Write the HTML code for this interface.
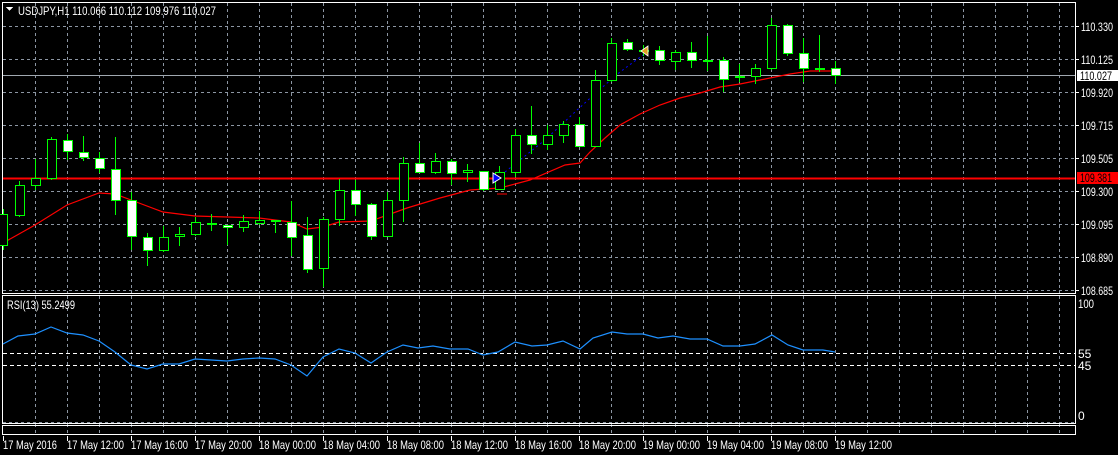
<!DOCTYPE html>
<html><head><meta charset="utf-8"><style>
html,body{margin:0;padding:0;background:#000;width:1118px;height:455px;overflow:hidden}
svg{display:block}
text{font-family:"Liberation Sans",sans-serif;font-size:12px;fill:#fff}
</style></head><body>
<svg width="1118" height="455" viewBox="0 0 1118 455" xmlns="http://www.w3.org/2000/svg" shape-rendering="crispEdges">
<g stroke="#8c96a3" stroke-dasharray="3,3" stroke-width="1">
<path d="M35.5 3V293M67.5 3V293M99.5 3V293M131.5 3V293M163.5 3V293M195.5 3V293M227.5 3V293M259.5 3V293M291.5 3V293M323.5 3V293M355.5 3V293M387.5 3V293M419.5 3V293M451.5 3V293M483.5 3V293M515.5 3V293M547.5 3V293M579.5 3V293M611.5 3V293M643.5 3V293M675.5 3V293M707.5 3V293M739.5 3V293M771.5 3V293M803.5 3V293M835.5 3V293M867.5 3V293M899.5 3V293M931.5 3V293M963.5 3V293M995.5 3V293M1027.5 3V293M1059.5 3V293"/>
<path d="M35.5 296V423M67.5 296V423M99.5 296V423M131.5 296V423M163.5 296V423M195.5 296V423M227.5 296V423M259.5 296V423M291.5 296V423M323.5 296V423M355.5 296V423M387.5 296V423M419.5 296V423M451.5 296V423M483.5 296V423M515.5 296V423M547.5 296V423M579.5 296V423M611.5 296V423M643.5 296V423M675.5 296V423M707.5 296V423M739.5 296V423M771.5 296V423M803.5 296V423M835.5 296V423M867.5 296V423M899.5 296V423M931.5 296V423M963.5 296V423M995.5 296V423M1027.5 296V423M1059.5 296V423"/>
<path d="M35.5 424V436M67.5 424V436M99.5 424V436M131.5 424V436M163.5 424V436M195.5 424V436M227.5 424V436M259.5 424V436M291.5 424V436M323.5 424V436M355.5 424V436M387.5 424V436M419.5 424V436M451.5 424V436M483.5 424V436M515.5 424V436M547.5 424V436M579.5 424V436M611.5 424V436M643.5 424V436M675.5 424V436M707.5 424V436M739.5 424V436M771.5 424V436M803.5 424V436M835.5 424V436M867.5 424V436M899.5 424V436M931.5 424V436M963.5 424V436M995.5 424V436M1027.5 424V436M1059.5 424V436"/>
<path d="M3 26.5H1075M3 59.5H1075M3 92.5H1075M3 125.5H1075M3 158.5H1075M3 191.5H1075M3 224.5H1075M3 257.5H1075M3 290.5H1075M3 422.5H1075"/>
</g>
<g stroke="#fff" stroke-dasharray="4,3"><path d="M3 353.5H1075M3 365.5H1075"/></g>
<path d="M3 75.5H1075" stroke="#a0a8b0"/>
<path d="M3 178.5H1075" stroke="#ff0000" stroke-width="2"/>
<g fill="none" stroke="#fff">
<rect x="2.5" y="2.5" width="1073" height="291"/>
<rect x="2.5" y="295.5" width="1073" height="128"/>
<rect x="2.5" y="425.5" width="1073" height="9"/>
</g>
<polyline fill="none" stroke="#ff0000" stroke-width="1.2" shape-rendering="auto" points="3,243 35,225 67,205 99,193 115,194 131,200 163,212 195,216 227,217 259,218 291,222 307,229 323,227 339,222 371,221 407,208 440,198 470,190 500,188 530,180 565,165 580,163 590,152 605,138 620,125 640,114 660,105 680,98 700,93 720,87 740,84 760,80 790,74 810,71 840,71"/>
<polyline fill="none" stroke="#0000ff" stroke-dasharray="2,3" shape-rendering="auto" points="505,172 545,140 575,112 598,91 620,72 643,55"/>
<g stroke="#00ff00" stroke-width="1">
<path d="M3.5 209V250M19.5 181V217M35.5 159V190M51.5 137V180M67.5 134V160M83.5 136V161M99.5 152V173M115.5 137V215M131.5 192V250M147.5 233V266M163.5 226V252M179.5 227V246M195.5 217V236M211.5 214V231M227.5 225V245M243.5 215V232M259.5 211V225M275.5 220V233M291.5 201V256M307.5 217V273M323.5 217V287M339.5 179V226M355.5 180V216M371.5 203V240M387.5 192V236M403.5 157V222M419.5 143V172M435.5 153V174M451.5 159V185M467.5 164V182M483.5 171V191M499.5 166V190M515.5 129V177M531.5 106V154M547.5 125V150M563.5 121V143M579.5 117V146M595.5 70V146M611.5 38V82M627.5 39V51M643.5 45V56M659.5 46V65M675.5 50V70M691.5 42V68M707.5 36V71M723.5 57V92M739.5 64V82M755.5 64V84M771.5 18V70M787.5 24V56M803.5 38V82M819.5 35V72M835.5 61V84"/>
<g fill="#000">
<rect x="-1.5" y="214.5" width="9" height="31"/>
<rect x="15.5" y="185.5" width="9" height="30"/>
<rect x="31.5" y="178.5" width="9" height="7"/>
<rect x="47.5" y="139.5" width="9" height="39"/>
<rect x="159.5" y="237.5" width="9" height="13"/>
<rect x="175.5" y="234.5" width="9" height="2"/>
<rect x="191.5" y="222.5" width="9" height="12"/>
<rect x="239.5" y="221.5" width="9" height="6"/>
<rect x="255.5" y="220.5" width="9" height="3"/>
<rect x="319.5" y="219.5" width="9" height="49"/>
<rect x="335.5" y="190.5" width="9" height="29"/>
<rect x="383.5" y="200.5" width="9" height="36"/>
<rect x="399.5" y="163.5" width="9" height="37"/>
<rect x="431.5" y="161.5" width="9" height="11"/>
<rect x="463.5" y="170.5" width="9" height="2"/>
<rect x="495.5" y="172.5" width="9" height="17"/>
<rect x="511.5" y="135.5" width="9" height="37"/>
<rect x="543.5" y="135.5" width="9" height="9"/>
<rect x="559.5" y="124.5" width="9" height="11"/>
<rect x="591.5" y="80.5" width="9" height="66"/>
<rect x="607.5" y="43.5" width="9" height="37"/>
<rect x="671.5" y="52.5" width="9" height="9"/>
<rect x="735.5" y="76.5" width="9" height="1"/>
<rect x="751.5" y="68.5" width="9" height="8"/>
<rect x="767.5" y="25.5" width="9" height="43"/>
</g>
<g fill="#fff">
<rect x="63.5" y="140.5" width="9" height="11"/>
<rect x="79.5" y="152.5" width="9" height="5"/>
<rect x="95.5" y="158.5" width="9" height="10"/>
<rect x="111.5" y="169.5" width="9" height="31"/>
<rect x="127.5" y="200.5" width="9" height="36"/>
<rect x="143.5" y="237.5" width="9" height="13"/>
<rect x="207.5" y="223.5" width="9" height="1"/>
<rect x="223.5" y="225.5" width="9" height="2"/>
<rect x="271.5" y="220.5" width="9" height="1"/>
<rect x="287.5" y="222.5" width="9" height="15"/>
<rect x="303.5" y="235.5" width="9" height="34"/>
<rect x="351.5" y="190.5" width="9" height="14"/>
<rect x="367.5" y="204.5" width="9" height="32"/>
<rect x="415.5" y="163.5" width="9" height="9"/>
<rect x="447.5" y="161.5" width="9" height="12"/>
<rect x="479.5" y="171.5" width="9" height="18"/>
<rect x="527.5" y="135.5" width="9" height="9"/>
<rect x="575.5" y="124.5" width="9" height="22"/>
<rect x="623.5" y="42.5" width="9" height="7"/>
<rect x="639.5" y="50.5" width="9" height="1"/>
<rect x="655.5" y="50.5" width="9" height="10"/>
<rect x="687.5" y="52.5" width="9" height="8"/>
<rect x="703.5" y="60.5" width="9" height="1"/>
<rect x="719.5" y="60.5" width="9" height="19"/>
<rect x="783.5" y="25.5" width="9" height="28"/>
<rect x="799.5" y="53.5" width="9" height="15"/>
<rect x="831.5" y="68.5" width="9" height="7"/>
</g>
<rect x="815.5" y="68.5" width="9" height="1" fill="#00ff00"/>
</g>
<path d="M493 173L501 178L493 183Z" fill="#0000ff" stroke="#fff" shape-rendering="auto"/>
<path d="M648 46L641 51L648 56Z" fill="#e0a020" stroke="#fff" stroke-width="0.8" shape-rendering="auto"/>
<path d="M497 194H507" stroke="#ff0000" stroke-width="1.2"/>
<polyline fill="none" stroke="#1e90ff" stroke-width="1.2" shape-rendering="auto" points="3,344 18,336 35,334 51,327 67,333 83,335 99,341 115,352 131,365 147,369 163,364 179,364 195,359 211,360 227,361 243,359 259,358 275,359 291,365 307,376 323,357 339,349 355,353 371,363 387,352 403,345 418,348 433,346 450,349 468,349 483,355 498,352 515,342 532,346 547,345 563,341 580,349 593,338 612,332 627,334 643,334 658,338 673,336 690,339 707,339 723,346 740,346 755,344 772,335 788,345 803,350 823,350 835,352"/>
<path d="M6 7H13L9.5 11Z" fill="#fff"/>
<text x="18" y="15" textLength="198" lengthAdjust="spacingAndGlyphs">USDJPY,H1  110.066 110.112 109.976 110.027</text>
<text x="7" y="309" textLength="68" lengthAdjust="spacingAndGlyphs">RSI(13) 55.2499</text>
<g stroke="#fff"><path d="M1075 26.5H1079M1075 59.5H1079M1075 92.5H1079M1075 125.5H1079M1075 158.5H1079M1075 191.5H1079M1075 224.5H1079M1075 257.5H1079M1075 290.5H1079"/></g>
<g>
<text x="1081" y="31" textLength="32" lengthAdjust="spacingAndGlyphs">110.330</text>
<text x="1081" y="64" textLength="32" lengthAdjust="spacingAndGlyphs">110.125</text>
<text x="1081" y="97" textLength="32" lengthAdjust="spacingAndGlyphs">109.920</text>
<text x="1081" y="130" textLength="32" lengthAdjust="spacingAndGlyphs">109.715</text>
<text x="1081" y="163" textLength="32" lengthAdjust="spacingAndGlyphs">109.505</text>
<text x="1081" y="196" textLength="32" lengthAdjust="spacingAndGlyphs">109.300</text>
<text x="1081" y="229" textLength="32" lengthAdjust="spacingAndGlyphs">109.095</text>
<text x="1081" y="262" textLength="32" lengthAdjust="spacingAndGlyphs">108.890</text>
<text x="1081" y="295" textLength="32" lengthAdjust="spacingAndGlyphs">108.685</text>
<text x="1078" y="308" textLength="16" lengthAdjust="spacingAndGlyphs">100</text>
<text x="1078" y="358">55</text>
<text x="1078" y="370">45</text>
<text x="1078" y="420">0</text>
</g>
<rect x="1077" y="70" width="41" height="11" fill="#fff"/>
<text x="1080" y="80" textLength="32" lengthAdjust="spacingAndGlyphs" style="fill:#000">110.027</text>
<rect x="1077" y="172" width="41" height="12" fill="#ff0000"/>
<text x="1080" y="182" textLength="32" lengthAdjust="spacingAndGlyphs" style="fill:#000">109.381</text>
<g stroke="#fff"><path d="M3.5 436V441M67.5 436V441M131.5 436V441M195.5 436V441M259.5 436V441M323.5 436V441M387.5 436V441M451.5 436V441M515.5 436V441M579.5 436V441M643.5 436V441M707.5 436V441M771.5 436V441M835.5 436V441"/></g>
<g>
<text x="3" y="449" textLength="54" lengthAdjust="spacingAndGlyphs">17 May 2016</text>
<text x="67" y="449" textLength="57" lengthAdjust="spacingAndGlyphs">17 May 12:00</text>
<text x="131" y="449" textLength="57" lengthAdjust="spacingAndGlyphs">17 May 16:00</text>
<text x="195" y="449" textLength="57" lengthAdjust="spacingAndGlyphs">17 May 20:00</text>
<text x="259" y="449" textLength="57" lengthAdjust="spacingAndGlyphs">18 May 00:00</text>
<text x="323" y="449" textLength="57" lengthAdjust="spacingAndGlyphs">18 May 04:00</text>
<text x="387" y="449" textLength="57" lengthAdjust="spacingAndGlyphs">18 May 08:00</text>
<text x="451" y="449" textLength="57" lengthAdjust="spacingAndGlyphs">18 May 12:00</text>
<text x="515" y="449" textLength="57" lengthAdjust="spacingAndGlyphs">18 May 16:00</text>
<text x="579" y="449" textLength="57" lengthAdjust="spacingAndGlyphs">18 May 20:00</text>
<text x="643" y="449" textLength="57" lengthAdjust="spacingAndGlyphs">19 May 00:00</text>
<text x="707" y="449" textLength="57" lengthAdjust="spacingAndGlyphs">19 May 04:00</text>
<text x="771" y="449" textLength="57" lengthAdjust="spacingAndGlyphs">19 May 08:00</text>
<text x="835" y="449" textLength="57" lengthAdjust="spacingAndGlyphs">19 May 12:00</text>
</g>
</svg>
</body></html>
